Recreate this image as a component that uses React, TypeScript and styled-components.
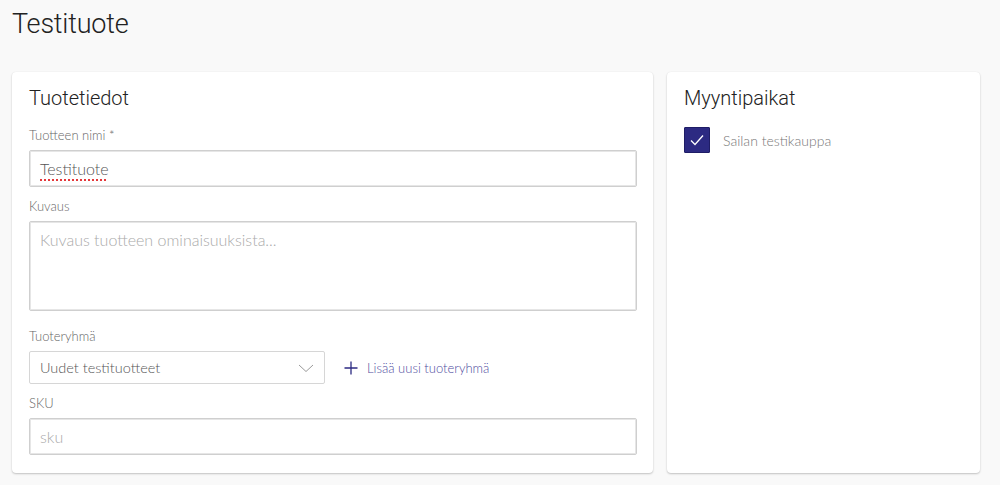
import React from "react";
import styled, { createGlobalStyle } from "styled-components";

const Global = createGlobalStyle`
  html, body { margin: 0; padding: 0; background: #f9f9f9; }
  body { font-family: "Lato", "Noto Sans", sans-serif; font-weight: 300; color: #444; }
  * { box-sizing: border-box; }
`;

const Page = styled.div`
  width: 1000px;
  height: 485px;
  padding: 0 20px 0 12px;
  overflow: hidden;
`;

const Title = styled.h1`
  margin: 0;
  padding-top: 7px;
  height: 72px;
  font-family: "Roboto", "Liberation Sans", sans-serif;
  font-weight: 300;
  font-size: 27px;
  line-height: 34px;
  color: #222;
  letter-spacing: -0.2px;
`;

const Columns = styled.div`
  display: grid;
  grid-template-columns: 641px 313px;
  gap: 14px;
  align-items: stretch;
`;

const Card = styled.section`
  background: #fff;
  border-radius: 4px;
  box-shadow: 0 1px 2px rgba(0, 0, 0, 0.22), 0 0 1px rgba(0, 0, 0, 0.08);
  padding: 14px 16px 18px 17px;
  height: 401px;
`;

const CardTitle = styled.h2`
  margin: 0 0 17px;
  font-family: "Roboto", "Liberation Sans", sans-serif;
  font-weight: 300;
  font-size: 20px;
  line-height: 24px;
  color: #222;
`;

const Field = styled.div<{ $gap?: number }>`
  margin-top: ${(p) => p.$gap ?? 0}px;
  display: flex;
  flex-direction: column;
`;

const Label = styled.label`
  font-size: 13px;
  line-height: 16px;
  color: #666;
  font-weight: 300;
  margin-bottom: 7px;
`;

const TextBox = styled.div<{ $h: number; $top?: boolean }>`
  height: ${(p) => p.$h}px;
  border: 1px solid #cfcfcf;
  box-shadow: inset 0 0 0 1px #e6e6e6;
  border-radius: 2px;
  padding: 0 10px;
  display: flex;
  align-items: ${(p) => (p.$top ? "flex-start" : "center")};
  padding-top: ${(p) => (p.$top ? 8 : 0)}px;
  font-size: 16px;
  color: #555;
  background: #fff;
`;

const Value = styled.span<{ $spell?: boolean }>`
  color: #555;
  text-decoration: ${(p) => (p.$spell ? "underline dotted #e5383b" : "none")};
  text-underline-offset: 4px;
  text-decoration-thickness: 1.5px;
`;

const Placeholder = styled.span`
  color: #aaa;
`;

const Row = styled.div`
  display: flex;
  align-items: center;
`;

const Select = styled.div`
  width: 296px;
  height: 33px;
  border: 1px solid #d6d6d6;
  border-radius: 2px;
  padding: 0 10px;
  display: flex;
  align-items: center;
  justify-content: space-between;
  font-size: 14.5px;
  color: #555;
`;

const AddLink = styled.a`
  margin-left: 19px;
  display: flex;
  align-items: center;
  gap: 9px;
  font-size: 13px;
  font-weight: 300;
  color: #4f4ca0;
  text-decoration: none;
`;

const CheckRow = styled.div`
  display: flex;
  align-items: center;
  gap: 13px;
  margin-top: 0;
`;

const Check = styled.span`
  width: 26px;
  height: 26px;
  background: #2c2a82;
  border: 1px solid #1f1d66;
  border-radius: 1px;
  display: flex;
  align-items: center;
  justify-content: center;
`;

const CheckLabel = styled.span`
  font-size: 14px;
  color: #777;
`;

export default function App() {
  return (
    <>
      <Global />
      <Page>
        <Title>Testituote</Title>
        <Columns>
          <Card>
            <CardTitle>Tuotetiedot</CardTitle>
            <Field>
              <Label>Tuotteen nimi *</Label>
              <TextBox $h={37} role="textbox">
                <Value $spell>Testituote</Value>
              </TextBox>
            </Field>
            <Field $gap={11}>
              <Label>Kuvaus</Label>
              <TextBox $h={90} $top role="textbox">
                <Placeholder>Kuvaus tuotteen ominaisuuksista...</Placeholder>
              </TextBox>
            </Field>
            <Field $gap={17}>
              <Label>Tuoteryhmä</Label>
              <Row>
                <Select>
                  <span>Uudet testituotteet</span>
                  <svg width="16" height="10" viewBox="0 0 16 10">
                    <path d="M1 2 L8 8.5 L15 2" fill="none" stroke="#9a9a9a" strokeWidth="1" />
                  </svg>
                </Select>
                <AddLink href="#">
                  <svg width="14" height="14" viewBox="0 0 14 14">
                    <path d="M7 0.5 V13.5 M0.5 7 H13.5" stroke="#2c2a82" strokeWidth="1.3" />
                  </svg>
                  Lisää uusi tuoteryhmä
                </AddLink>
              </Row>
            </Field>
            <Field $gap={11}>
              <Label>SKU</Label>
              <TextBox $h={37} role="textbox">
                <Placeholder>sku</Placeholder>
              </TextBox>
            </Field>
          </Card>
          <Card>
            <CardTitle>Myyntipaikat</CardTitle>
            <CheckRow>
              <Check>
                <svg width="14" height="12" viewBox="0 0 14 12">
                  <path d="M1 6.5 L5 10.5 L13 1.5" fill="none" stroke="#fff" strokeWidth="1.3" />
                </svg>
              </Check>
              <CheckLabel>Sailan testikauppa</CheckLabel>
            </CheckRow>
          </Card>
        </Columns>
      </Page>
    </>
  );
}
